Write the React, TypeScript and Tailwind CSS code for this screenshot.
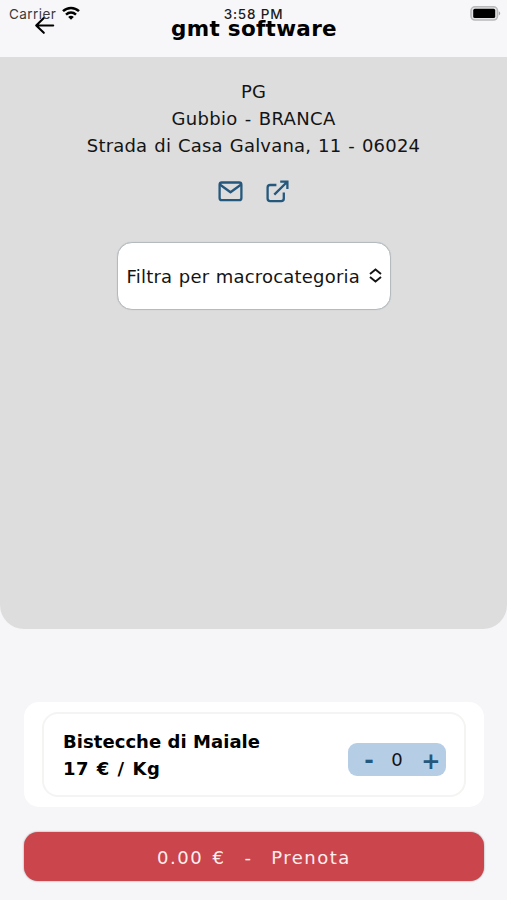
import { useState } from "react";

const products = [{ id: 1, name: "Bistecche di Maiale", price: 17, unit: "Kg" }];

function StatusBar() {
  return (
    <div className="absolute inset-x-0 top-0 flex h-7 items-center justify-between pl-[9px] pr-[6px] font-['Inter',sans-serif] text-[13.5px] leading-7 text-[#1c1c1e]">
      <div className="flex items-center gap-[6px]">
        <span className="tracking-[0.45px] text-[#3a3a3c]">Carrier</span>
        <svg className="h-[14px] w-[18px] -translate-y-px" viewBox="0 0 18 14" fill="none" stroke="#000" strokeWidth="2.5">
          <path d="M1 5.2c4.6-4.3 11.4-4.3 16 0" />
          <path d="M4 8.6c3-2.7 7-2.7 10 0" />
          <path d="M9 13.8 6.2 10.9c1.6-1.5 4-1.5 5.6 0Z" fill="#000" stroke="none" />
        </svg>
      </div>
      <span className="absolute left-1/2 -translate-x-1/2 whitespace-nowrap font-medium tracking-[0.8px]">3:58 PM</span>
      <svg className="h-[15px] w-[31px] -translate-y-px" viewBox="0 0 31 15">
        <rect x="1" y="0.8" width="26.5" height="13.2" rx="4" fill="#e4e4e6" stroke="#b9b9bb" strokeWidth="1.6" />
        <rect x="3.2" y="2.8" width="22" height="9.2" rx="1.6" fill="#000" />
        <path d="M28.8 5.3c1.9.8 1.9 3.4 0 4.2Z" fill="#a5a5a8" />
      </svg>
    </div>
  );
}

function MailIcon() {
  return (
    <svg className="h-[21px] w-[25px]" viewBox="0 0 25 21" fill="none" stroke="#24587c" strokeWidth="2.3" strokeLinejoin="round" strokeLinecap="round">
      <rect x="1.6" y="1.5" width="21.8" height="17.6" rx="2.2" />
      <path d="m2.2 3.8 10.3 7.4 10.3-7.4" />
    </svg>
  );
}

function ExternalIcon() {
  return (
    <svg className="h-[23px] w-[23px]" viewBox="0 0 23 23" fill="none" stroke="#24587c" strokeWidth="2.3">
      <path d="M10.4 5H4.2Q1.6 5 1.6 7.6v11q0 2.6 2.6 2.6h11q2.6 0 2.6-2.6v-6.2" />
      <path d="M8.3 14.6 21 2M14.2 1.7h7.2v7.2" />
    </svg>
  );
}

export default function App() {
  const [quantity, setQuantity] = useState(0);
  const product = products[0];
  const total = (quantity * product.price).toFixed(2);

  return (
    <div className="relative flex h-[900px] w-full flex-col overflow-hidden bg-[#f6f6f9] font-['DejaVu_Sans',sans-serif] text-[18px] leading-[27px] text-[#141414]">
      <header className="flex h-[57px] shrink-0 items-start bg-[#f7f7f9] pt-[14px]">
        <button className="ml-[34px] w-[22px]" aria-label="Indietro">
          <svg className="h-[22px] w-[22px]" viewBox="0 0 22 22" fill="none" stroke="#000" strokeWidth="2.1" strokeLinecap="round" strokeLinejoin="round">
            <path d="M19.2 11.5H2.2M9.8 4 2.2 11.5 9.8 18.8" />
          </svg>
        </button>
        <h1 className="mr-[55px] mt-px flex-1 text-center text-[21.5px] font-bold tracking-[0.3px] text-black">gmt software</h1>
      </header>

      <main className="flex h-[572px] shrink-0 flex-col items-center rounded-b-[24px] bg-[#dddddd] pt-[21px]">
        <p>PG</p>
        <p className="tracking-[0.35px] [word-spacing:1px]">Gubbio - BRANCA</p>
        <p className="tracking-[0.2px] [word-spacing:1px]">Strada di Casa Galvana, 11 - 06024</p>
        <div className="mt-[20px] flex h-[24px] items-center gap-[23px]">
          <MailIcon />
          <ExternalIcon />
        </div>
        <button className="mt-[39px] flex h-[68px] w-[274px] items-center justify-between rounded-[15px] border-[1.5px] border-[#b4babe] bg-white pl-[9px] pr-[8px] shadow-[0_0_1px_#b4babe]">
          <span className="whitespace-nowrap tracking-[0.2px] [word-spacing:0.6px]">Filtra per macrocategoria</span>
          <svg className="h-[15px] w-[13px] -translate-y-px" viewBox="0 0 13 15" fill="none" stroke="#141414" strokeWidth="1.9">
            <path d="M1 6 6.5 1.5 12 6M1 9l5.5 4.5L12 9" />
          </svg>
        </button>
      </main>

      <section className="ml-6 mr-[23px] mt-[73px] h-[105px] shrink-0 rounded-[15px] bg-white px-[18px] pt-[10px]">
        <div className="flex h-[85px] items-center justify-between rounded-[16px] border-2 border-[#f4f4f3] pl-[19px] pr-[18px]">
          <div className="whitespace-nowrap font-bold text-black">
            <p className="tracking-[0.05px]">{product.name}</p>
            <p className="tracking-[0.5px] [word-spacing:1px]">
              {product.price} € / {product.unit}
            </p>
          </div>
          <div className="mt-[10px] flex h-[33px] w-[98px] items-center rounded-[9px] bg-[#b6cde6]">
            <button className="ml-[15px] mt-[2px] w-[12px] text-[23px] font-bold text-[#24587c]" onClick={() => setQuantity(Math.max(0, quantity - 1))}>
              -
            </button>
            <span className="ml-[16px] w-[12px] text-center">{quantity}</span>
            <button className="ml-[18px] mt-[3px] w-[20px] text-[23px] font-bold text-[#24587c]" onClick={() => setQuantity(quantity + 1)}>
              +
            </button>
          </div>
        </div>
      </section>

      <button className="ml-6 mr-[23px] mt-[25px] h-[49px] shrink-0 whitespace-pre rounded-[14px] bg-[#ca454c] pt-px text-[18px] tracking-[1.5px] text-[#ffeeee] shadow-[0_0_2px_#8a8a8a] [word-spacing:2.2px]">
        {total} €  -  Prenota
      </button>

      <StatusBar />
    </div>
  );
}
